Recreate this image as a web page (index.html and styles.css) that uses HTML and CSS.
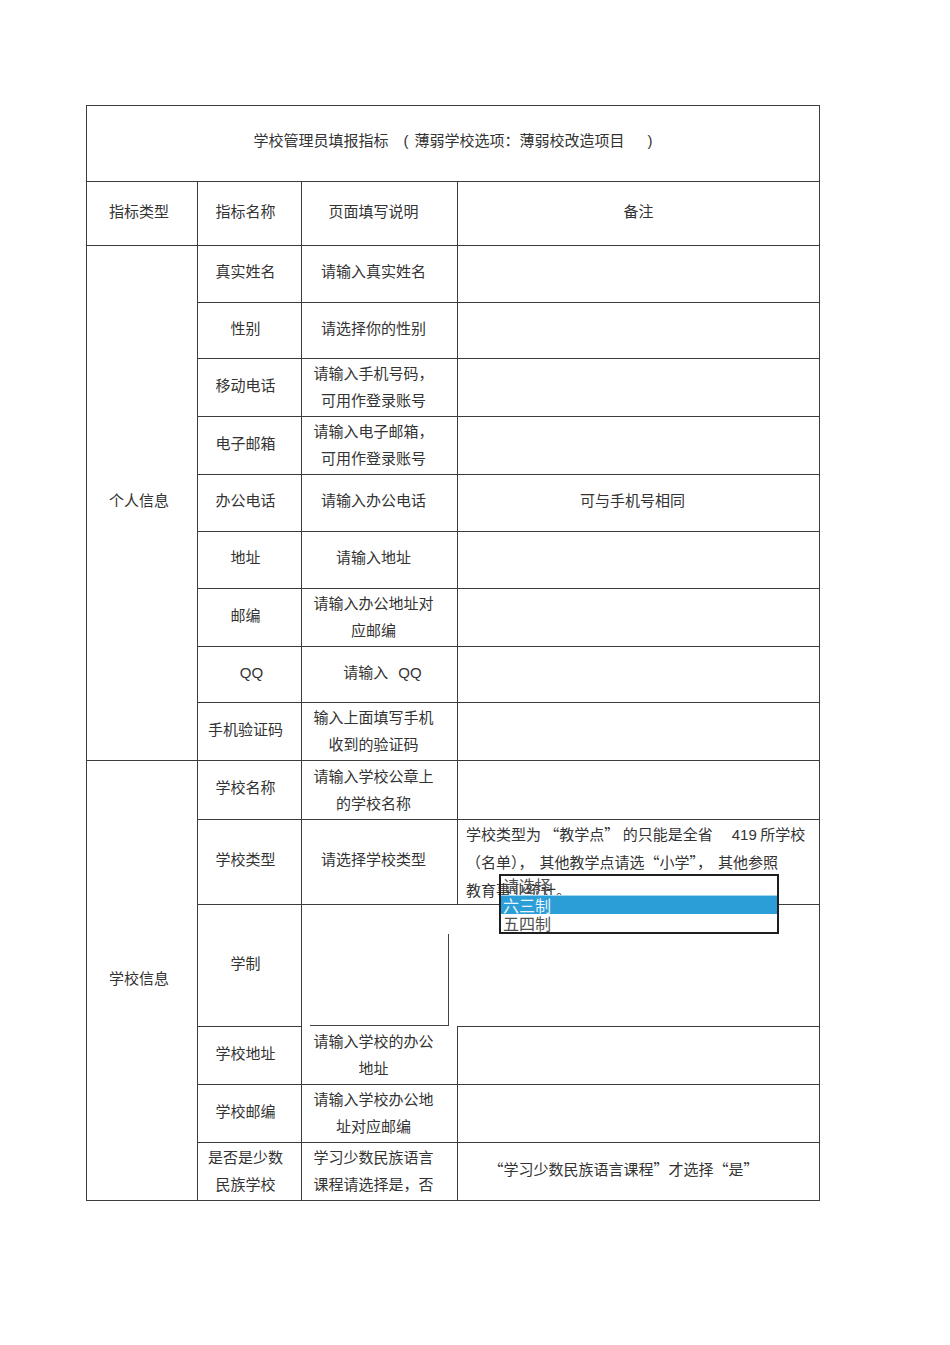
FILE: index.html
```html
<!DOCTYPE html>
<html lang="zh-CN">
<head>
<meta charset="utf-8">
<title>学校管理员填报指标</title>
<link rel="stylesheet" href="styles.css">
</head>
<body>
<div class="page">
  <div class="sheet">
    <table class="grid">
      <colgroup>
        <col class="w1"><col class="w2"><col class="w3"><col class="w4">
      </colgroup>
      <tr class="h76">
        <td colspan="4" class="title"><span class="t1">学校管理员填报指标</span><span class="lat paren-l">(</span><span class="t2">薄弱学校选项：薄弱校改造项目</span><span class="lat paren-r">)</span></td>
      </tr>
      <tr class="h64">
        <td class="c1">指标类型</td>
        <td class="c2">指标名称</td>
        <td class="c3">页面填写说明</td>
        <td class="c4 head4">备注</td>
      </tr>
      <tr class="h57">
        <td class="c1" rowspan="9">个人信息</td>
        <td class="c2">真实姓名</td>
        <td class="c3">请输入真实姓名</td>
        <td class="c4"></td>
      </tr>
      <tr class="h56">
        <td class="c2">性别</td>
        <td class="c3">请选择你的性别</td>
        <td class="c4"></td>
      </tr>
      <tr class="h58">
        <td class="c2">移动电话</td>
        <td class="c3 two">请输入手机号码，<br>可用作登录账号</td>
        <td class="c4"></td>
      </tr>
      <tr class="h58">
        <td class="c2">电子邮箱</td>
        <td class="c3 two">请输入电子邮箱，<br>可用作登录账号</td>
        <td class="c4"></td>
      </tr>
      <tr class="h57">
        <td class="c2">办公电话</td>
        <td class="c3">请输入办公电话</td>
        <td class="c4">可与手机号相同</td>
      </tr>
      <tr class="h57">
        <td class="c2">地址</td>
        <td class="c3">请输入地址</td>
        <td class="c4"></td>
      </tr>
      <tr class="h58">
        <td class="c2">邮编</td>
        <td class="c3 two">请输入办公地址对<br>应邮编</td>
        <td class="c4"></td>
      </tr>
      <tr class="h56">
        <td class="c2 qq-name"><span class="lat">QQ</span></td>
        <td class="c3 qq-hint">请输入<span class="lat qq">QQ</span></td>
        <td class="c4"></td>
      </tr>
      <tr class="h58">
        <td class="c2">手机验证码</td>
        <td class="c3 two">输入上面填写手机<br>收到的验证码</td>
        <td class="c4"></td>
      </tr>
      <tr class="h59">
        <td class="c1" rowspan="7">学校信息</td>
        <td class="c2">学校名称</td>
        <td class="c3 two">请输入学校公章上<br>的学校名称</td>
        <td class="c4"></td>
      </tr>
      <tr class="h85">
        <td class="c2">学校类型</td>
        <td class="c3">请选择学校类型</td>
        <td class="c4 note">学校类型为 “教学点” 的只能是全省<span class="g19"></span><span class="lat">419</span> 所学校<br>（名单），<span class="g6"></span>其他教学点请选“小学”，<span class="g6"></span>其他参照<br>教育事业统计。</td>
      </tr>
      <tr class="h122">
        <td class="c2">学制</td>
        <td class="c3 open" colspan="2"></td>
      </tr>
      <tr class="h58">
        <td class="c2">学校地址</td>
        <td class="c3 two notop">请输入学校的办公<br>地址</td>
        <td class="c4"></td>
      </tr>
      <tr class="h58">
        <td class="c2">学校邮编</td>
        <td class="c3 two">请输入学校办公地<br>址对应邮编</td>
        <td class="c4"></td>
      </tr>
      <tr class="h58">
        <td class="c2 two">是否是少数<br>民族学校</td>
        <td class="c3 two">学习少数民族语言<br>课程请选择是，否</td>
        <td class="c4 last4">“学习少数民族语言课程”才选择“是”</td>
      </tr>
    </table>
    <div class="bracket"></div>
    <div class="listbox">
      <div class="opt">请选择</div>
      <div class="opt sel">六三制</div>
      <div class="opt solid">五四制</div>
    </div>
  </div>
</div>
</body>
</html>
```
FILE: styles.css
```css
body {
  margin: 0;
  background: #ffffff;
}
.page {
  padding: 105px 0 0 86px;
}
.sheet {
  position: relative;
  width: 734px;
}
.grid {
  border-collapse: collapse;
  table-layout: fixed;
  width: 734px;
  font-family: "Noto Sans CJK SC", sans-serif;
  font-size: 15px;
  line-height: 28px;
  color: #333333;
}
.w1 { width: 111px; }
.w2 { width: 104px; }
.w3 { width: 156px; }
.w4 { width: 362px; }
.grid td {
  border: 1px solid #3c3c3c;
  padding: 0 0 6px 0;
  text-align: center;
  vertical-align: middle;
  white-space: nowrap;
}
.grid td.c1 { padding-right: 6px; }
.grid td.c2 { padding-right: 8px; }
.grid td.c3 { padding-right: 12px; }
.grid td.c4 { padding-right: 12px; }
.grid td.head4 { padding-right: 0; }
.grid td.last4 { padding-right: 30px; }
.grid td.qq-name { padding-left: 4px; padding-right: 0; }
.grid td.qq-hint { padding-left: 6px; padding-right: 0; }
.grid td.two {
  line-height: 27px;
  padding-bottom: 3px;
}
.grid td.note {
  text-align: left;
  line-height: 28px;
  padding: 0 0 0 8px;
}
.grid td.title { padding-bottom: 8px; }
.grid td.open { border-bottom: none; }
.grid td.notop { border-top: none; }

.h76 { height: 76px; }
.h64 { height: 64px; }
.h56 { height: 56px; }
.h57 { height: 57px; }
.h58 { height: 58px; }
.h59 { height: 59px; }
.h85 { height: 85px; }
.h122 { height: 122px; }

.lat {
  font-family: "Liberation Sans", Arial, sans-serif;
  line-height: 1;
}
.paren-l { margin-left: 15px; margin-right: 6px; }
.paren-r { margin-left: 23px; }
.qq { margin-left: 10px; }
.g19 { display: inline-block; width: 19px; }
.g6 { display: inline-block; width: 6px; }

.bracket {
  position: absolute;
  left: 224px;
  top: 829px;
  width: 139px;
  height: 92px;
  box-sizing: border-box;
  border-right: 1px solid #444444;
  border-bottom: 1px solid #444444;
}
.listbox {
  position: absolute;
  left: 413px;
  top: 769px;
  width: 280px;
  height: 60px;
  box-sizing: border-box;
  border: 2px solid #1e1e1e;
  font-family: "Noto Sans CJK SC", sans-serif;
  font-size: 16px;
  color: #505050;
}
.opt {
  height: 19px;
  line-height: 19px;
  padding-left: 2px;
}
.opt.sel {
  background: #2b9dd7;
  color: #e8f5fc;
  border-top: 1px solid #9fd6f2;
  box-sizing: border-box;
}
.opt.solid {
  height: 18px;
  background: #ffffff;
}
```
